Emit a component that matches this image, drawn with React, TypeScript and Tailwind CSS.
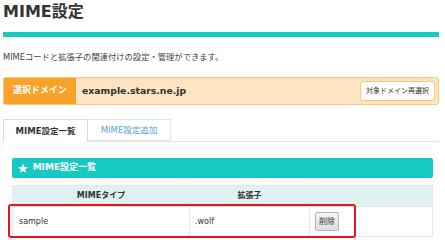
import React from "react";

const font = {
  fontFamily: '"DejaVu Sans", "Noto Sans CJK JP", sans-serif',
};

export default function App() {
  return (
    <div className="w-[445px] h-[240px] overflow-hidden bg-white text-[#333]" style={font}>
      <div className="pl-[3px] pr-[6px] pt-[2px]">
        {/* TITLE */}
        <h1 className="text-[16px] font-bold leading-[20px] text-[#333]">MIME設定</h1>
        <div className="mt-[10px] h-[5px] bg-[#17c9c3]" />

        <p className="mt-[14px] text-[8.3px] leading-[12px] text-[#444]">
          MIMEコードと拡張子の関連付けの設定・管理ができます。
        </p>

        {/* DOMAIN BAR */}
        <div className="mt-[14px] flex h-[28px] items-stretch rounded-[3px] border border-[#fcc578] bg-[#fde4c3]">
          <div className="flex w-[72px] items-center justify-center bg-[#f9a22a] text-[9px] font-bold text-white">
            選択ドメイン
          </div>
          <div className="flex flex-1 items-center pl-[6px] text-[9.3px] font-bold text-[#333]">
            example.stars.ne.jp
          </div>
          <div className="flex items-center pr-[3px]">
            <button className="h-[20px] rounded-[3px] border border-[#fcc578] bg-white px-[5px] text-[7px] text-[#333]">
              対象ドメイン再選択
            </button>
          </div>
        </div>

        {/* TABS */}
        <div className="mt-[14px] flex border-b border-[#e3e3e3]">
          <div className="-mb-px flex h-[23px] w-[85px] items-center justify-center border border-b-0 border-[#dcdcdc] bg-white text-[8.5px] font-bold text-[#333]">
            MIME設定一覧
          </div>
          <div className="flex h-[22px] w-[83px] items-center justify-center border border-l-0 border-[#e6e6e6] bg-white text-[8.5px] text-[#5aa0d6]">
            MIME設定追加
          </div>
        </div>

        {/* LIST SECTION */}
        <div className="ml-[9px] mr-[6px] mt-[16px]">
          <div className="flex h-[20px] items-center rounded-[2px] bg-[#17c9c3] pl-[5px] text-[9px] font-bold text-white">
            <span className="mr-[4px] text-[13px] leading-none">★</span>
            MIME設定一覧
          </div>

          <div className="relative mt-[7px]">
            <div className="grid grid-cols-[177px_120px_1fr] border border-[#e6e6e6]">
              <div className="flex h-[20px] items-center justify-center border-r border-[#e6e6e6] bg-[#def2f1] text-[8px] font-bold">
                MIMEタイプ
              </div>
              <div className="flex h-[20px] items-center justify-center border-r border-[#e6e6e6] bg-[#def2f1] text-[8px] font-bold">
                拡張子
              </div>
              <div className="h-[20px] bg-[#def2f1]" />
              <div className="flex h-[30px] items-center border-r border-t border-[#e6e6e6] pl-[6px] text-[8px]">
                sample
              </div>
              <div className="flex h-[30px] items-center border-r border-t border-[#e6e6e6] pl-[5px] text-[8px]">
                .wolf
              </div>
              <div className="flex h-[30px] items-center border-t border-[#e6e6e6] pl-[5px]">
                <button className="h-[19px] rounded-[2px] border border-[#b5b5b5] bg-gradient-to-b from-[#f7f7f7] to-[#dedede] px-[3px] text-[8px] text-[#333]">
                  削除
                </button>
              </div>
            </div>
            {/* highlight */}
            <div className="absolute left-[-4px] top-[19px] h-[34px] w-[348px] rounded-[3px] border-2 border-[#e8131b]" />
          </div>
        </div>
      </div>
    </div>
  );
}
